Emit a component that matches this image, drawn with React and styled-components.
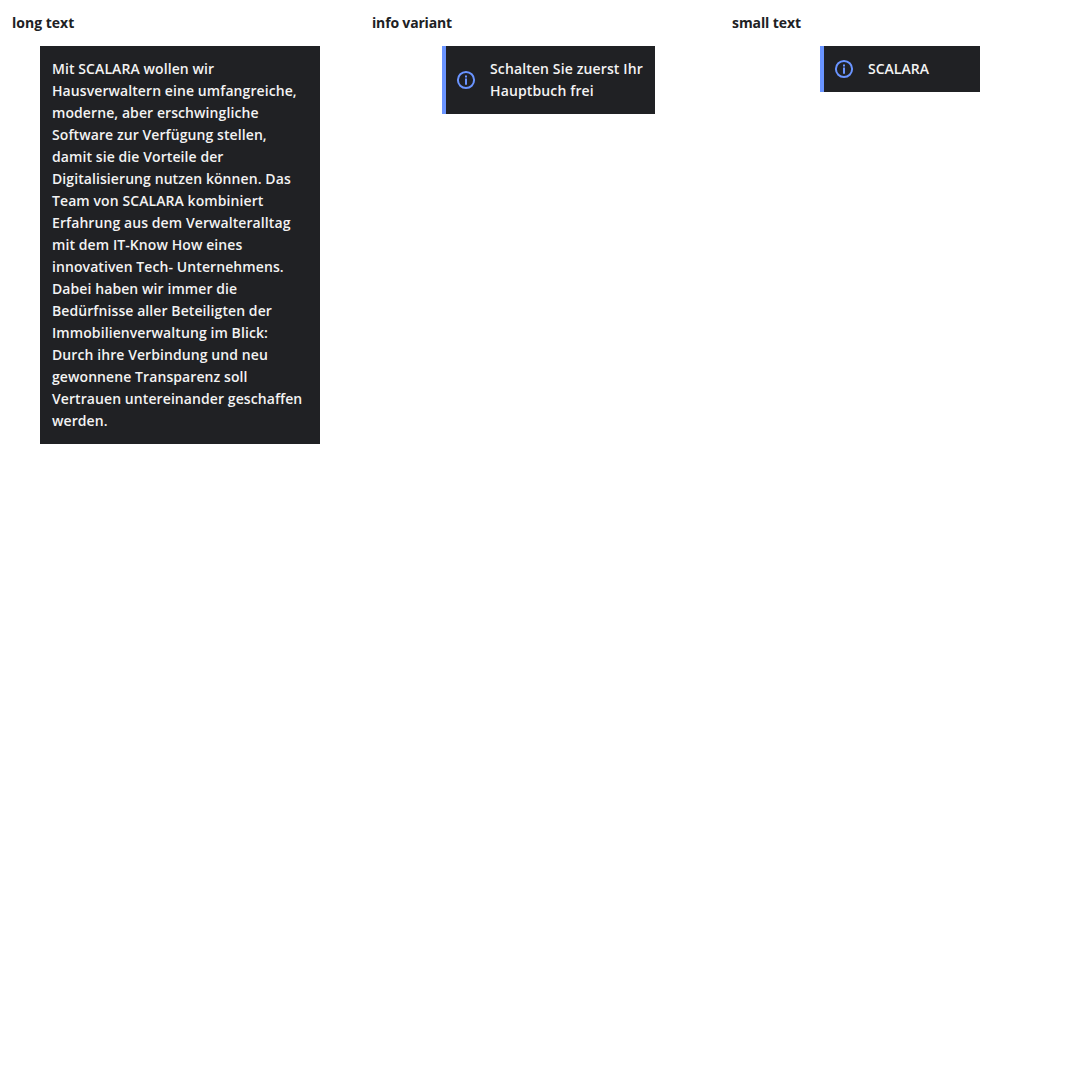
import React from 'react';
import styled, { createGlobalStyle } from 'styled-components';

const GlobalStyle = createGlobalStyle`
  *, *::before, *::after { box-sizing: border-box; }
  body {
    margin: 0;
    background: #ffffff;
    color: #202124;
    font-family: "Open Sans", sans-serif;
    font-size: 14px;
    line-height: 22px;
    font-feature-settings: "liga" 1;
  }
`;

const Stories = styled.main`
  display: grid;
  grid-template-columns: repeat(3, 1fr);
  align-items: start;
`;

const Story = styled.section`
  display: flex;
  flex-direction: column;
  padding: 12px;
`;

const Title = styled.h2`
  margin: 0 0 12px;
  font-size: 14px;
  font-weight: 700;
  line-height: 22px;
  letter-spacing: ${({ $tracking = 0 }) => $tracking}px;
`;

const Tooltip = styled.div`
  display: flex;
  align-items: center;
  align-self: center;
  gap: 13px;
  width: ${({ $width }) => $width}px;
  margin-left: ${({ $shift = 0 }) => $shift}px;
  padding: 12px;
  background: #202124;
  color: #f3f3f3;
  font-weight: 600;
  letter-spacing: ${({ $tracking = 0 }) => $tracking}px;
  border-left: ${({ $info }) => ($info ? '4px solid #6a94ff' : '0')};
  padding-left: ${({ $info }) => ($info ? '9px' : '12px')};
`;

const Message = styled.span`
  min-width: 0;
`;

const Icon = styled.svg`
  flex: none;
  width: 22px;
  height: 22px;
  fill: none;
  stroke: #6a94ff;
`;

const InfoIcon = () => (
  <Icon viewBox="0 0 22 22" aria-hidden="true">
    <circle cx="11" cy="11" r="8.1" strokeWidth="2" />
    <path d="M11 6.500v1.900M11 9.500v6.200" strokeWidth="2" />
  </Icon>
);

const stories = [
  {
    title: 'long text',
    width: 280,
    tracking: 0.085,
    text: 'Mit SCALARA wollen wir Hausverwaltern eine umfangreiche, moderne, aber erschwingliche Software zur Verfügung stellen, damit sie die Vorteile der Digitalisierung nutzen können. Das Team von SCALARA kombiniert Erfahrung aus dem Verwalteralltag mit dem IT-Know How eines innovativen Tech- Unternehmens. Dabei haben wir immer die Bedürfnisse aller Beteiligten der Immobilienverwaltung im Blick: Durch ihre Verbindung und neu gewonnene Transparenz soll Vertrauen untereinander geschaffen werden.',
  },
  {
    title: 'info variant',
    titleTracking: -0.17,
    width: 213,
    shift: 17,
    tracking: 0.13,
    info: true,
    text: 'Schalten Sie zuerst Ihr Hauptbuch frei',
  },
  { title: 'small text', titleTracking: -0.08, width: 160, info: true, text: 'SCALARA' },
];

export default function App() {
  return (
    <>
      <GlobalStyle />
      <Stories>
        {stories.map(({ title, titleTracking, width, shift, tracking, info, text }) => (
          <Story key={title}>
            <Title $tracking={titleTracking}>{title}</Title>
            <Tooltip $width={width} $shift={shift} $tracking={tracking} $info={info}>
              {info && <InfoIcon />}
              <Message>{text}</Message>
            </Tooltip>
          </Story>
        ))}
      </Stories>
    </>
  );
}
